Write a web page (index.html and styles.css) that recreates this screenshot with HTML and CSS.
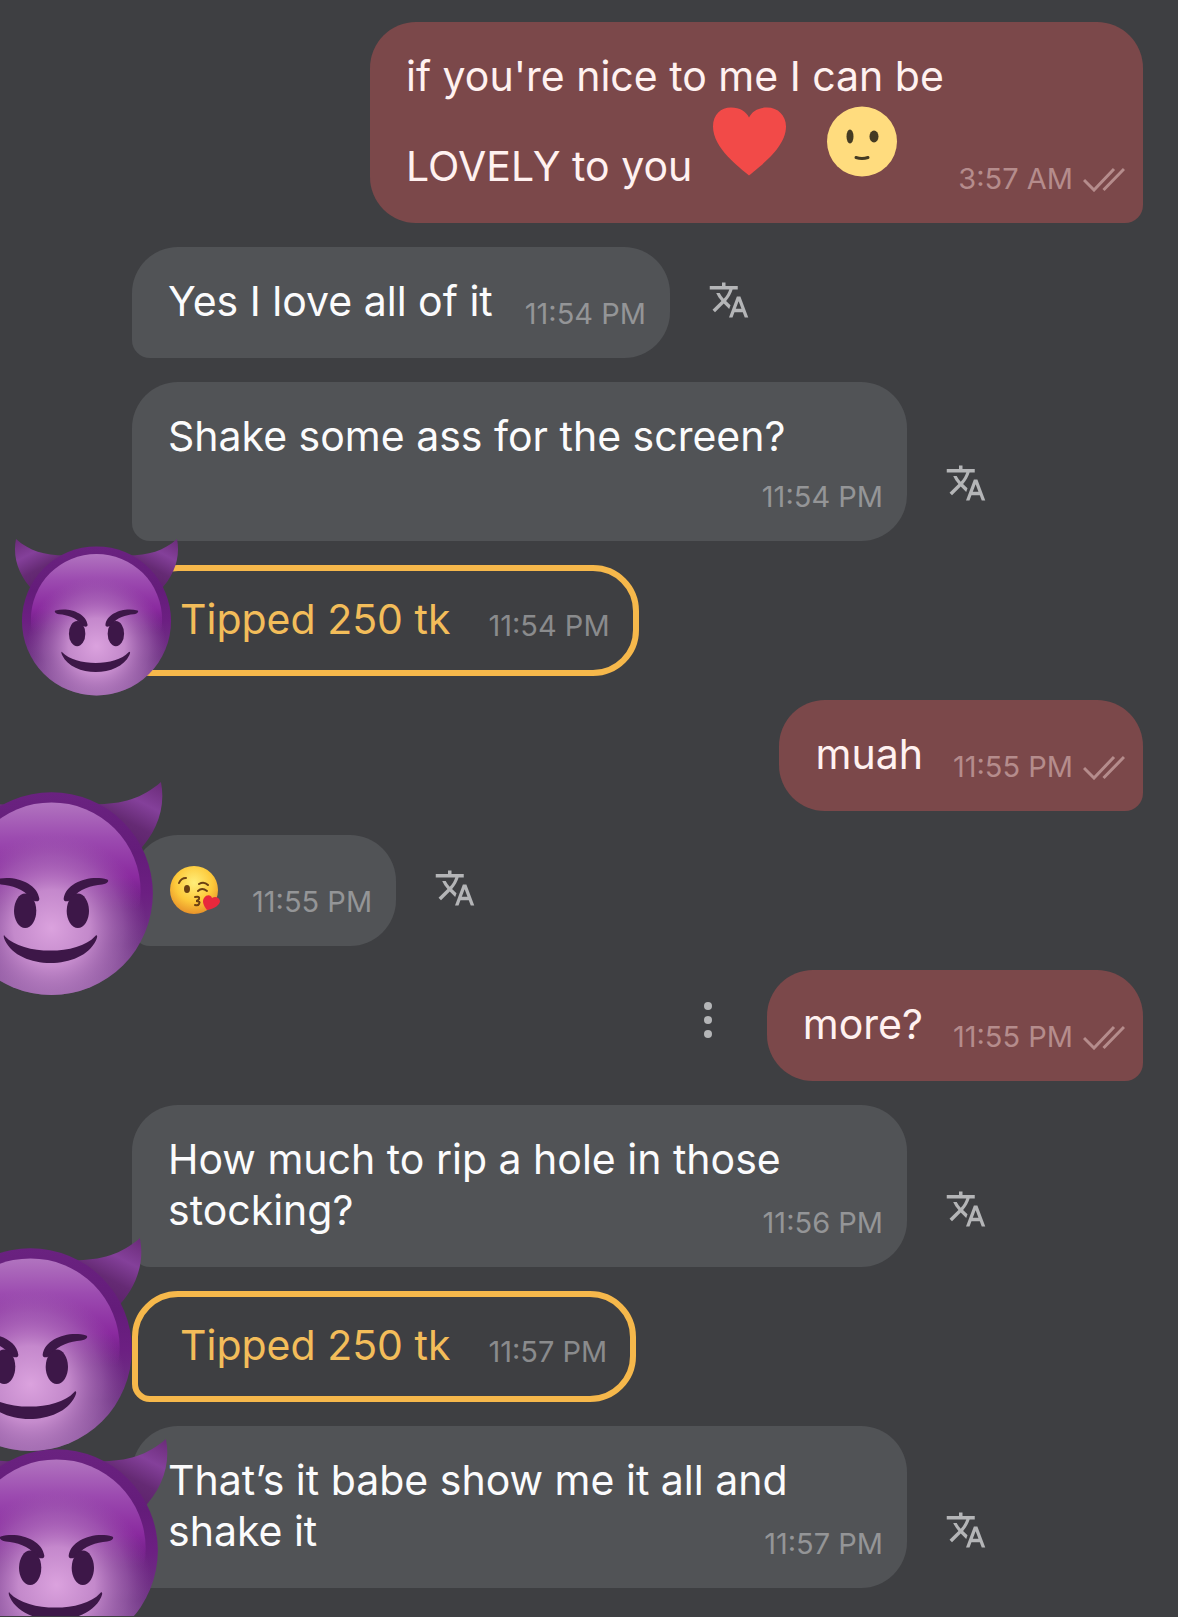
FILE: index.html
```
<!DOCTYPE html>
<html lang="en">
  <head>
    <meta charset="utf-8" />
    <meta name="viewport" content="width=device-width, initial-scale=1" />
    <title>Messages</title>
    <link rel="stylesheet" href="styles.css">
  </head>
  <body>
    <!-- shared shapes -->
    <svg class="defs" width="0" height="0" aria-hidden="true">
      <defs>
        <linearGradient id="rim" x1="0" y1="0" x2="0" y2="1">
          <stop offset="0" stop-color="#6a2280" />
          <stop offset="0.3" stop-color="#641c7a" />
          <stop offset="0.5" stop-color="#6c1f82" />
          <stop offset="0.75" stop-color="#6f3584" />
          <stop offset="1" stop-color="#9663a6" />
        </linearGradient>
        <linearGradient id="shine" x1="0" y1="0" x2="0" y2="1">
          <stop offset="0" stop-color="#b174bf" />
          <stop offset="0.2" stop-color="#9c4bb0" />
          <stop offset="0.42" stop-color="#8a2a9f" />
          <stop offset="0.6" stop-color="#84269a" stop-opacity="0" />
        </linearGradient>
        <radialGradient id="glow" gradientUnits="userSpaceOnUse" cx="0" cy="34" r="94">
          <stop offset="0" stop-color="#dba2de" />
          <stop offset="0.4" stop-color="#cd93d3" stop-opacity="0.9" />
          <stop offset="0.75" stop-color="#b077bd" stop-opacity="0.45" />
          <stop offset="1" stop-color="#9a5cab" stop-opacity="0" />
        </radialGradient>
        <linearGradient id="horn" x1="0" y1="0" x2="0.5" y2="1">
          <stop offset="0" stop-color="#6a2b78" />
          <stop offset="0.35" stop-color="#84409a" />
          <stop offset="0.65" stop-color="#652a74" />
          <stop offset="1" stop-color="#5a2069" />
        </linearGradient>
        <radialGradient id="yellow" cx="0.5" cy="0.35" r="0.65">
          <stop offset="0" stop-color="#ffee7a" />
          <stop offset="0.6" stop-color="#fdc93a" />
          <stop offset="1" stop-color="#e8932a" />
        </radialGradient>
      </defs>

      <symbol id="devil" viewBox="-112 -114 224 216">
        <path id="horn-shape" fill="url(#horn)" d="M-108 -110C-90 -94 -70 -88 -42 -88L-84 -40C-104 -60 -113 -85 -108 -110Z" />
        <use href="#horn-shape" transform="scale(-1 1)" />
        <circle r="100" fill="url(#rim)" />
        <ellipse cy="-2" rx="88" ry="88" fill="url(#shine)" />
        <circle r="100" fill="url(#glow)" />
        <g fill="#3d1748">
          <path d="M-55 -14C-38 -19 -14 -11 -12 5C-12 9 -17 8 -20 5C-28 -5 -39 -8 -50 -9C-56 -10 -57 -13 -55 -14Z" />
          <path d="M55 -14C38 -19 14 -11 12 5C12 9 17 8 20 5C28 -5 39 -8 50 -9C56 -10 57 -13 55 -14Z" />
          <ellipse cx="-26" cy="17" rx="11" ry="17" />
          <ellipse cx="26" cy="17" rx="11" ry="17" />
          <path d="M-46 42C-28 61 26 61 43 42C45 40 46 42 44 46C30 76 -32 76 -46 46C-48 42 -47 40 -46 42Z" />
        </g>
      </symbol>

      <symbol id="translate" viewBox="0 0 24 24">
        <path d="M12.870 15.070l-2.540-2.510.03-.03c1.740-1.940 2.980-4.170 3.710-6.530H17V4h-7V2H8v2H1v1.990h11.170C11.500 7.920 10.440 9.750 9 11.350 8.070 10.320 7.300 9.190 6.690 8h-2c.73 1.630 1.730 3.170 2.980 4.560l-5.090 5.020L4 19l5-5 3.110 3.110.76-2.040zM18.500 10h-2L12 22h2l1.120-3h4.750L21 22h2l-4.500-12zm-2.620 7l1.620-4.330L19.120 17h-3.240z" />
      </symbol>

      <symbol id="checks" viewBox="0 0 42 25">
        <path d="M1 13L11 23L31 2M20.500 23L41 2" />
      </symbol>
    </svg>

    <main class="chat">
      <div class="row sent">
        <div class="bubble stickers">
          if you're nice to me I can be<br>
          LOVELY to you
          <svg class="sticker" viewBox="0 0 78 78" role="img" aria-label="heart">
            <path fill="#f24a48" d="M39 73C30 65 3 46 3 24C3 12 11 5 21 5C30 5 36 9 39 15C42 9 48 5 57 5C68 5 76 13 76 24C76 46 48 65 39 73Z" />
          </svg>
          <svg class="sticker" viewBox="0 0 78 78" role="img" aria-label="smile">
            <circle cx="39" cy="39" r="35" fill="#ffdc7e" />
            <ellipse cx="27" cy="34" rx="3.500" ry="7" fill="#453b23" />
            <ellipse cx="51" cy="34" rx="4.500" ry="6" fill="#453b23" />
            <path d="M33 55Q39 57 45 55" fill="none" stroke="#453b23" stroke-width="3" stroke-linecap="round" />
          </svg>
          <span class="meta"><time>3:57 AM</time><svg class="checks" aria-label="read"><use href="#checks" /></svg></span>
        </div>
      </div>

      <div class="row">
        <div class="bubble">Yes I love all of it <span class="meta"><time>11:54 PM</time></span></div>
        <button class="action" type="button" aria-label="Translate"><svg><use href="#translate" /></svg></button>
      </div>

      <div class="row">
        <div class="bubble time-below">Shake some ass for the screen? <span class="meta"><time>11:54 PM</time></span></div>
        <button class="action" type="button" aria-label="Translate"><svg><use href="#translate" /></svg></button>
      </div>

      <div class="row">
        <div class="bubble tip">Tipped 250 tk <span class="meta"><time>11:54 PM</time></span></div>
        <svg class="devil devil-small"><use href="#devil" /></svg>
      </div>

      <div class="row sent">
        <div class="bubble">muah <span class="meta"><time>11:55 PM</time><svg class="checks" aria-label="read"><use href="#checks" /></svg></span></div>
      </div>

      <div class="row">
        <div class="bubble">
          <svg class="kiss" viewBox="0 0 52 48" role="img" aria-label="face blowing a kiss">
            <circle cx="26" cy="24" r="24" fill="url(#yellow)" />
            <g fill="none" stroke="#6b4012" stroke-width="2" stroke-linecap="round">
              <path d="M11 17Q13 12 18 12" />
              <path d="M31 18Q36 15 40 19" />
              <path d="M30 25Q34 21 39 25" />
              <path d="M27 31Q32 30 31 33Q30 35 28 35Q33 35 31 38Q30 40 27 39" />
            </g>
            <ellipse cx="19" cy="23" rx="3" ry="4" fill="#6b4012" />
            <path fill="#e8283c" d="M39 44C35 39 34 35 36 32C39 28 43 29 44 32C47 30 51 31 52 35C52 39 46 43 39 44Z" />
          </svg>
          <span class="meta"><time>11:55 PM</time></span>
        </div>
        <button class="action" type="button" aria-label="Translate"><svg><use href="#translate" /></svg></button>
        <svg class="devil devil-a"><use href="#devil" /></svg>
      </div>

      <div class="row sent">
        <button class="action" type="button" aria-label="More options">
          <svg viewBox="0 0 42 42"><circle cx="21" cy="4" r="4" /><circle cx="21" cy="18" r="4" /><circle cx="21" cy="32" r="4" /></svg>
        </button>
        <div class="bubble">more? <span class="meta"><time>11:55 PM</time><svg class="checks" aria-label="read"><use href="#checks" /></svg></span></div>
      </div>

      <div class="row">
        <div class="bubble">How much to rip a hole in those stocking? <span class="meta"><time>11:56 PM</time></span></div>
        <button class="action" type="button" aria-label="Translate"><svg><use href="#translate" /></svg></button>
      </div>

      <div class="row">
        <div class="bubble tip">Tipped 250 tk <span class="meta"><time>11:57 PM</time></span></div>
        <svg class="devil devil-b"><use href="#devil" /></svg>
      </div>

      <div class="row">
        <div class="bubble">That’s it babe show me it all and shake it <span class="meta"><time>11:57 PM</time></span></div>
        <button class="action" type="button" aria-label="Translate"><svg><use href="#translate" /></svg></button>
        <svg class="devil devil-c"><use href="#devil" /></svg>
      </div>
    </main>
  </body>
</html>
```
FILE: styles.css
```
* {
  box-sizing: border-box;
}
body {
  margin: 0;
  background-color: #3e3f42;
  color: #fbfbfc;
  font-family: Inter, "Liberation Sans", sans-serif;
  font-size: 41px;
  line-height: 51px;
}
.defs {
  position: absolute;
}
.chat {
  display: flex;
  flex-direction: column;
  gap: 24px;
  padding: 22px 35px 28px 132px;
  overflow: hidden;
}
.row {
  display: flex;
  align-items: flex-end;
  position: relative; /* anchor for the devils */
}
.sent {
  justify-content: flex-end;
}

/* bubbles */
.bubble {
  display: flow-root;
  max-width: 775px;
  padding: 29px 24px 30px 36px;
  border-radius: 46px 46px 46px 18px;
  background-color: #515356;
}
.sent .bubble {
  padding-right: 18px;
  border-radius: 46px 46px 18px 46px;
  background-color: #7b484a;
  color: #fff1f0;
}
.bubble.tip {
  padding: 23px 23px 25px 42px;
  border: 6px solid #f6b84b;
  background-color: #3e3f42;
  color: #f3bd5a;
}

/* time floats to the end of the last line, or drops below it */
.meta {
  float: right;
  display: flex;
  align-items: center;
  gap: 10px;
  margin: 24px 0 0 32px;
  color: #949597;
  font-size: 29px;
  line-height: 28px;
}
.sent .meta {
  margin-left: 30px;
  color: #b58c8c;
}
.tip .meta {
  margin: 18px 0 0 38px;
  color: #8a8b8d;
}
.time-below .meta {
  margin-top: 21px;
}
.stickers .meta {
  margin: 63px 0 0 39px;
}
.checks {
  width: 42px;
  height: 25px;
  fill: none;
  stroke: currentColor;
  stroke-width: 3;
}

.sticker {
  width: 78px;
  height: 79px;
  margin: 0 18px 0 6px;
}
.kiss {
  width: 52px;
  height: 48px;
  vertical-align: -10px;
}

.action {
  flex: none;
  width: 42px;
  height: 42px;
  margin: 0 38px 37px;
  padding: 0;
  border: 0;
  background: none;
  fill: #b4b5b7;
  cursor: pointer;
}
.action svg {
  display: block;
  width: 42px;
  height: 42px;
}

/* devils cover the avatars on the left */
.devil {
  position: absolute;
  z-index: 1;
  width: 227px;
  height: 219px;
}
.devil-small {
  width: 167px;
  height: 161px;
  left: -119px;
  top: -29px;
}
.devil-a {
  left: -194px;
  top: -57px;
}
.devil-b {
  left: -215px;
  top: -57px;
}
.devil-c {
  left: -189px;
  top: 9px;
}
```
